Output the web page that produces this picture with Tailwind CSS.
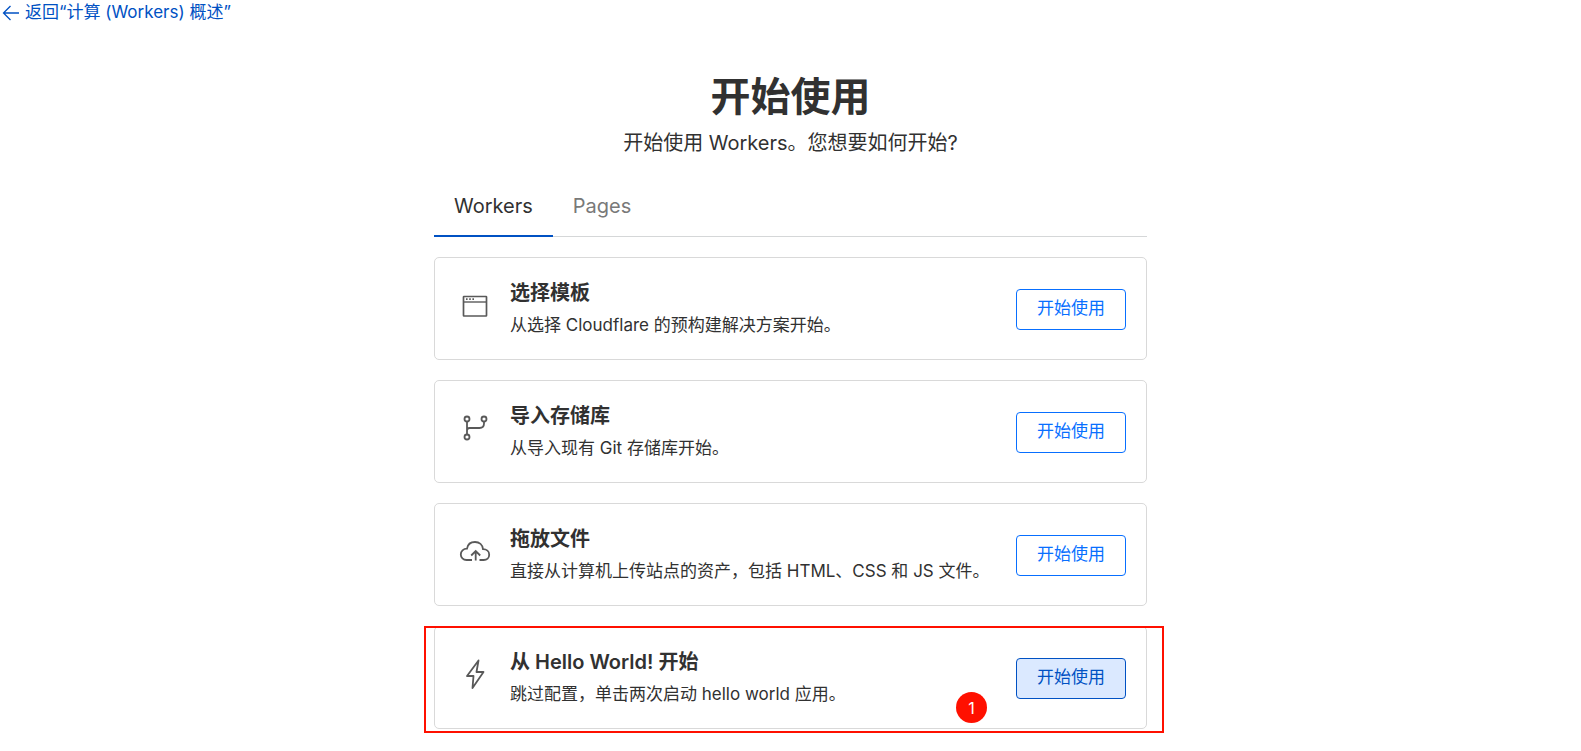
<!DOCTYPE html>
<html lang="zh-CN">
<head>
    <meta charset="UTF-8">
    <meta name="viewport" content="width=device-width, initial-scale=1.0">
    <title>开始使用 Workers</title>
    <script src="https://cdn.jsdelivr.net/npm/@tailwindcss/browser@4"></script>
    <style>
        body {
            font-family: 'Inter', 'Noto Sans CJK SC', sans-serif;
        }
    </style>
</head>
<body class="bg-white text-[#313131] min-h-screen">
    <a href="#" class="flex w-fit items-center gap-[5px] h-[26px] pl-[2px] text-[17px] text-[#0051c3]">
        <svg class="w-[18px] h-[18px]" viewBox="0 0 18 18" fill="none" stroke="currentColor" stroke-width="1.3" aria-hidden="true">
            <path d="M17 9H1.5M8.5 2L1.5 9l7 7"/>
        </svg>
        返回“计算 (Workers) 概述”
    </a>

    <main class="w-full max-w-[713px] mx-auto pt-[47px] pb-4">
        <header class="text-center">
            <h1 class="text-[40px] leading-[48px] font-bold">开始使用</h1>
            <p class="mt-2 text-xl leading-7">开始使用 Workers。您想要如何开始?</p>
        </header>

        <!-- Tabs -->
        <nav class="mt-[15px] flex border-b border-[#d5d7d8] text-xl leading-7">
            <a href="#workers" class="-mb-px px-5 pt-5 pb-[15px] border-b-2 border-[#0051c3]" aria-current="page">Workers</a>
            <a href="#pages" class="-mb-px px-5 pt-5 pb-[15px] border-b-2 border-transparent text-[#797979]">Pages</a>
        </nav>

        <div class="mt-5 flex flex-col gap-5">
            <section class="flex items-center border border-[#d9d9d9] rounded-[5px] pl-6 pr-5 pt-[21px] pb-5">
                <svg class="w-8 h-8 mr-[19px] mb-2 shrink-0" viewBox="0 0 32 32" fill="none" stroke="#595959" stroke-width="1.7" aria-hidden="true">
                    <rect x="4.500" y="7.500" width="23" height="19.500" rx=".5"/>
                    <path d="M4.500 13H27.500" stroke-width="1.400"/>
                    <path d="M7 10.200h1.600M10.200 10.200h1.600M13.400 10.200H15"/>
                </svg>
                <div class="flex-1">
                    <h2 class="text-xl leading-7 font-semibold">选择模板</h2>
                    <p class="mt-1 text-[17px] leading-7">从选择 Cloudflare 的预构建解决方案开始。</p>
                </div>
                <button type="button" class="shrink-0 h-[41px] px-5 border border-[#086fff] rounded text-[17px] text-[#086fff] hover:bg-[#dbe9ff]">开始使用</button>
            </section>

            <section class="flex items-center border border-[#d9d9d9] rounded-[5px] pl-6 pr-5 pt-[21px] pb-5">
                <svg class="w-8 h-8 mr-[19px] mb-2 shrink-0" viewBox="0 0 32 32" fill="none" stroke="#595959" stroke-width="1.8" aria-hidden="true">
                    <circle cx="8" cy="7" r="2.500"/>
                    <circle cx="25" cy="7" r="2.500"/>
                    <circle cx="8" cy="25" r="2.500"/>
                    <path d="M8 9.500V22.500M8 18.500C8 17 9 16 10.500 16H20.500C23.500 16 25 14 25 11.500V9.500"/>
                </svg>
                <div class="flex-1">
                    <h2 class="text-xl leading-7 font-semibold">导入存储库</h2>
                    <p class="mt-1 text-[17px] leading-7">从导入现有 Git 存储库开始。</p>
                </div>
                <button type="button" class="shrink-0 h-[41px] px-5 border border-[#086fff] rounded text-[17px] text-[#086fff] hover:bg-[#dbe9ff]">开始使用</button>
            </section>

            <section class="flex items-center border border-[#d9d9d9] rounded-[5px] pl-6 pr-5 pt-[21px] pb-5">
                <svg class="w-8 h-8 mr-[19px] mb-2 shrink-0" viewBox="0 0 32 32" fill="none" stroke="#595959" stroke-width="1.8" aria-hidden="true">
                    <path d="M13 25H7.500C4.200 25 1.800 22.600 1.800 19.500C1.800 16.200 4.300 13.700 8 13.700C8.700 9.500 12 7 16 7C20.300 7 23.600 9.900 24 14.200C27.500 14.200 30.200 16.500 30.200 19.700C30.200 22.800 27.800 25 24.700 25H20.500"/>
                    <path d="M16.700 25.500V16.500M12.200 20.500L16.700 16L21.200 20.500"/>
                </svg>
                <div class="flex-1">
                    <h2 class="text-xl leading-7 font-semibold">拖放文件</h2>
                    <p class="mt-1 text-[17px] leading-7">直接从计算机上传站点的资产，包括 HTML、CSS 和 JS 文件。</p>
                </div>
                <button type="button" class="shrink-0 h-[41px] px-5 border border-[#086fff] rounded text-[17px] text-[#086fff] hover:bg-[#dbe9ff]">开始使用</button>
            </section>

            <section class="relative flex items-center border border-[#d9d9d9] rounded-[5px] pl-6 pr-5 pt-[21px] pb-5">
                <svg class="w-8 h-8 mr-[19px] mb-2 shrink-0" viewBox="0 0 32 32" fill="none" stroke="#595959" stroke-width="1.8" stroke-linejoin="round" aria-hidden="true">
                    <path d="M19.500 2.500L8 18H14.500L13.500 30L24.500 14H17.500Z"/>
                </svg>
                <div class="flex-1">
                    <h2 class="text-xl leading-7 font-semibold">从 Hello World! 开始</h2>
                    <p class="mt-1 text-[17px] leading-7">跳过配置，单击两次启动 hello world 应用。</p>
                </div>
                <button type="button" class="shrink-0 h-[41px] px-5 border border-[#0051c3] rounded bg-[#dbe9ff] text-[17px] text-[#0051c3]">开始使用</button>

                <!-- Step marker -->
                <div class="absolute -left-[11px] -right-[18px] -top-px -bottom-[5px] border-2 border-[#ff1000] pointer-events-none"></div>
                <span class="absolute right-[159px] bottom-[5px] w-[31px] h-[31px] rounded-full bg-[#ff1000] text-white text-base flex items-center justify-center">1</span>
            </section>
        </div>
    </main>
</body>
</html>
